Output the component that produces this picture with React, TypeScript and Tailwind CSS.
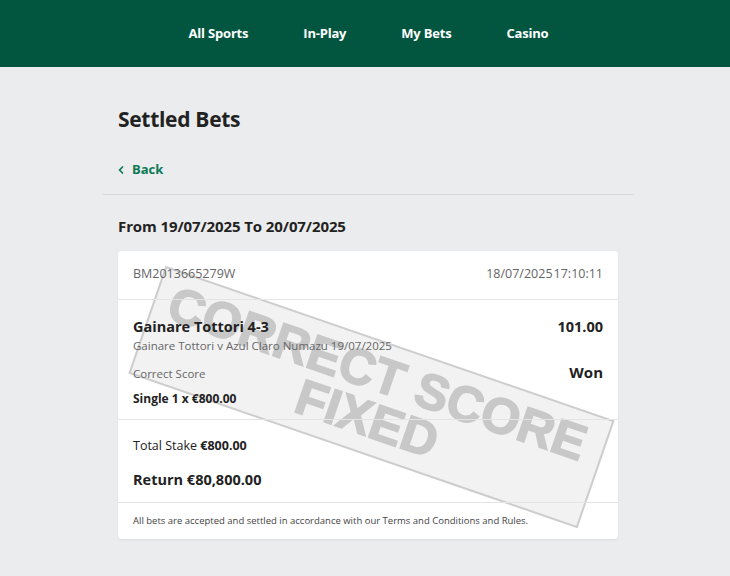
import { ChevronLeft } from 'lucide-react'

const NAV = ['All Sports', 'In-Play', 'My Bets', 'Casino']

function Stamp() {
  return (
    <div className="pointer-events-none absolute left-[16px] top-[89px] flex h-[114px] w-[475px] rotate-[19deg] flex-col items-center justify-center border-2 border-[#cdcdcd] bg-[#f2f2f3] pb-[2px] font-['Liberation_Sans',Arial,sans-serif] text-[50px] font-bold uppercase leading-[46px] text-[#c8c8c8] [-webkit-text-stroke:1.5px_#c8c8c8]">
      <span className="-ml-[4px]">Correct Score</span>
      <span className="ml-[6px]">Fixed</span>
    </div>
  )
}

export default function App() {
  return (
    <div className="min-h-[576px] bg-[#ebeced] font-['Open_Sans',Arial,sans-serif] text-[#222]">
      {/* top nav */}
      <header className="flex h-[67px] items-center justify-center bg-[#02563f] pl-[7px]">
        <nav className="flex gap-[55px]">
          {NAV.map(item => (
            <a key={item} className="text-[13px] font-bold tracking-[-0.2px] text-white">
              {item}
            </a>
          ))}
        </nav>
      </header>

      <main className="ml-[103px] w-[531px] pt-[37px]">
        <div className="px-[15px]">
          <h1 className="text-[21px] font-bold leading-[30px] tracking-[-0.3px]">Settled Bets</h1>
          <a className="mt-[26px] flex items-center gap-[5px] text-[13px] font-bold text-[#0b7a57]">
            <ChevronLeft size={12} strokeWidth={3.5} className="-ml-[3px]" />
            Back
          </a>
        </div>

        <div className="mt-[14px] h-px bg-[#d6d9db]" />

        <div className="px-[15px]">
          <h2 className="mt-[20px] text-[15px] font-bold leading-[22px] tracking-[-0.1px]">
            From 19/07/2025 To 20/07/2025
          </h2>

          <div className="relative mt-[14px] w-[500px] overflow-hidden rounded-[3px] bg-white shadow-[0_1px_2px_rgba(0,0,0,0.08)]">
            <Stamp />

            <div className="relative flex h-[49px] items-center justify-between border-b border-[#e2e4e5] px-[15px] text-[12.5px] text-[#666]">
              <span>BM2013665279W</span>
              <span>
                18/07/2025<span className="ml-[1px]">17:10:11</span>
              </span>
            </div>

            <div className="relative border-b border-[#e2e4e5] px-[15px] pb-[12px] pt-[17px]">
              <div className="flex items-center justify-between text-[14.5px] font-bold leading-[20px]">
                <span>Gainare Tottori 4-3</span>
                <span>101.00</span>
              </div>
              <div className="text-[11.5px] leading-[17px] text-[#666]">
                Gainare Tottori v Azul Claro Numazu 19/07/2025
              </div>
              <div className="mt-[10px] flex items-center justify-between">
                <span className="text-[11.5px] text-[#666]">Correct Score</span>
                <span className="-mt-[3px] text-[15px] font-bold">Won</span>
              </div>
              <div className="mt-[7px] text-[12px] font-bold leading-[17px]">Single 1 x €800.00</div>
            </div>

            <div className="relative border-b border-[#e2e4e5] px-[15px] pb-[11px] pt-[17px]">
              <div className="text-[12.5px] leading-[18px]">
                Total Stake <span className="font-bold">€800.00</span>
              </div>
              <div className="mt-[14px] text-[14.5px] font-bold leading-[22px]">Return €80,800.00</div>
            </div>

            <div className="relative px-[15px] pb-[12px] pt-[11px] text-[9.5px] leading-[13px] text-[#444]">
              All bets are accepted and settled in accordance with our Terms and Conditions and Rules.
            </div>
          </div>
        </div>
      </main>
    </div>
  )
}
